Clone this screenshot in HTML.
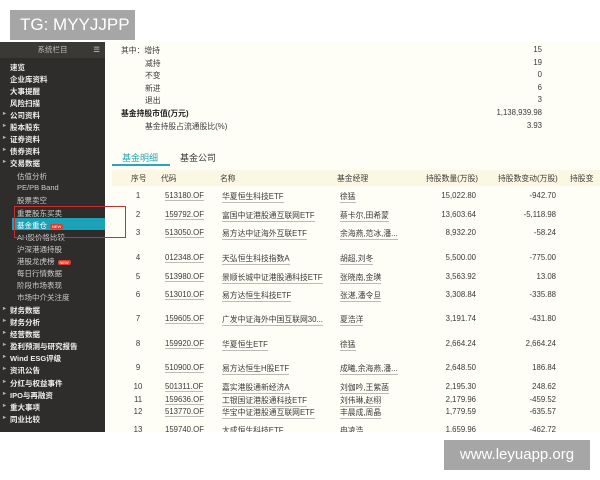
<!DOCTYPE html>
<html><head><meta charset="utf-8"><style>
*{margin:0;padding:0;box-sizing:border-box}
body{width:600px;height:480px;background:#fff;position:relative;overflow:hidden;font-family:"Liberation Sans","Noto Sans CJK SC",sans-serif;font-size:8px;color:#333}
.sb{position:absolute;left:0;top:42px;width:105px;height:390px;background:#2e2d2b}
.sbh{position:absolute;left:0;top:0;width:105px;height:16px;background:#3a3936;color:#bbb;font-size:7.5px;text-align:center;line-height:16px}
.it{position:absolute;left:10px;color:#eee;font-size:7.5px;font-weight:bold;white-space:nowrap}
.it.c{left:10px}
.it.c:before{content:"▸";position:absolute;left:-7px;color:#aaa;font-size:6px}
.it.s{left:17px;font-weight:normal;color:#ccc}
.main{position:absolute;left:105px;top:42px;width:495px;height:390px;background:#fefdf6}
.t{position:absolute;white-space:nowrap;font-size:7.8px;color:#3a3a3a}
.r{text-align:right}
.u{border-bottom:1px solid #bbb}
.new{background:#e03b2a;color:#fff;font-size:4px;padding:0 2px;border-radius:2px;margin-left:3px;vertical-align:middle}
</style></head><body>
<div style="position:absolute;left:10px;top:10px;width:125px;height:30px;background:#a6a6a6;color:#fff;font-size:17px;line-height:30px;padding-left:10px">TG: MYYJJPP</div>
<div class="sb">
<div class="sbh">系统栏目<span style="position:absolute;right:5px;color:#ccc">☰</span></div>
<div class="it" style="top:20px">速览</div>
<div class="it" style="top:32px">企业库资料</div>
<div class="it" style="top:44px">大事提醒</div>
<div class="it" style="top:56px">风险扫描</div>
<div class="it c" style="top:68px">公司资料</div>
<div class="it c" style="top:80px">股本股东</div>
<div class="it c" style="top:92px">证券资料</div>
<div class="it c" style="top:104px">债券资料</div>
<div class="it c" style="top:116px">交易数据</div>
<div class="it s" style="top:129px">估值分析</div>
<div class="it s" style="top:141px">PE/PB Band</div>
<div class="it s" style="top:153px">股票卖空</div>
<div class="it s" style="top:166px">重要股东买卖</div>
<div style="position:absolute;left:12px;top:176px;width:93px;height:12px;background:#1aa3b8"></div>
<div class="it s" style="top:178px;color:#fff">基金重仓<span class="new">NEW</span></div>
<div class="it s" style="top:190px">AH股价格比较</div>
<div class="it s" style="top:202px">沪深港通持股</div>
<div class="it s" style="top:214px">港股龙虎榜<span class="new">NEW</span></div>
<div class="it s" style="top:226px">每日行情数据</div>
<div class="it s" style="top:238px">阶段市场表现</div>
<div class="it s" style="top:250px">市场中介关注度</div>
<div class="it c" style="top:263px">财务数据</div>
<div class="it c" style="top:275px">财务分析</div>
<div class="it c" style="top:287px">经营数据</div>
<div class="it c" style="top:299px">盈利预测与研究报告</div>
<div class="it c" style="top:311px">Wind ESG评级</div>
<div class="it c" style="top:323px">资讯公告</div>
<div class="it c" style="top:336px">分红与权益事件</div>
<div class="it c" style="top:348px">IPO与再融资</div>
<div class="it c" style="top:360px">重大事项</div>
<div class="it c" style="top:372px">同业比较</div>
</div>
<div class="main"></div>
<div style="position:absolute;left:14px;top:206px;width:112px;height:32px;border:1.5px solid #c9302c"></div>

<div class="t" style="left:121px;top:45px">其中：增持</div>
<div class="t" style="left:145px;top:58px">减持</div>
<div class="t" style="left:145px;top:70px">不变</div>
<div class="t" style="left:145px;top:83px">新进</div>
<div class="t" style="left:145px;top:95px">退出</div>
<div class="t" style="left:121px;top:108px;font-weight:bold;color:#222">基金持股市值(万元)</div>
<div class="t" style="left:145px;top:121px">基金持股占流通股比(%)</div>
<div class="t r" style="right:58px;top:45px">15</div>
<div class="t r" style="right:58px;top:58px">19</div>
<div class="t r" style="right:58px;top:70px">0</div>
<div class="t r" style="right:58px;top:83px">6</div>
<div class="t r" style="right:58px;top:95px">3</div>
<div class="t r" style="right:58px;top:108px">1,138,939.98</div>
<div class="t r" style="right:58px;top:121px">3.93</div>

<div class="t" style="left:122px;top:151px;font-size:9px;color:#2aa6b5">基金明细</div>
<div class="t" style="left:180px;top:151px;font-size:9px">基金公司</div>
<div style="position:absolute;left:112px;top:164px;width:58px;height:1.5px;background:#2aa6b5"></div>
<div style="position:absolute;left:112px;top:170px;width:488px;height:16px;background:#fcf7e2"></div>
<div class="t" style="left:131px;top:173px">序号</div>
<div class="t" style="left:161px;top:173px">代码</div>
<div class="t" style="left:220px;top:173px">名称</div>
<div class="t" style="left:337px;top:173px">基金经理</div>
<div class="t" style="left:426px;top:173px">持股数量(万股)</div>
<div class="t" style="left:498px;top:173px">持股数变动(万股)</div>
<div class="t" style="left:570px;top:173px">持股变</div>

<div id="rows"></div>
<div style="position:absolute;left:105px;top:432px;width:495px;height:48px;background:#fff"></div>
<div style="position:absolute;left:444px;top:440px;width:146px;height:30px;background:#a6a6a6;color:#fff;font-size:15px;line-height:30px;text-align:center">www.leyuapp.org</div>
<script>
var d=[[196,1,"513180.OF","华夏恒生科技ETF","徐猛","15,022.80","-942.70"],
[215,2,"159792.OF","富国中证港股通互联网ETF","蔡卡尔,田希蒙","13,603.64","-5,118.98"],
[233,3,"513050.OF","易方达中证海外互联ETF","余海燕,范冰,潘...","8,932.20","-58.24"],
[258,4,"012348.OF","天弘恒生科技指数A","胡超,刘冬","5,500.00","-775.00"],
[277,5,"513980.OF","景顺长城中证港股通科技ETF","张晓南,金璜","3,563.92","13.08"],
[295,6,"513010.OF","易方达恒生科技ETF","张湛,潘令旦","3,308.84","-335.88"],
[319,7,"159605.OF","广发中证海外中国互联网30...","夏浩洋","3,191.74","-431.80"],
[344,8,"159920.OF","华夏恒生ETF","徐猛","2,664.24","2,664.24"],
[368,9,"510900.OF","易方达恒生H股ETF","成曦,余海燕,潘...","2,648.50","186.84"],
[387,10,"501311.OF","嘉实港股通新经济A","刘伽吟,王紫菡","2,195.30","248.62"],
[400,11,"159636.OF","工银国证港股通科技ETF","刘伟琳,赵栩","2,179.96","-459.52"],
[412,12,"513770.OF","华宝中证港股通互联网ETF","丰晨成,周晶","1,779.59","-635.57"],
[430,13,"159740.OF","大成恒生科技ETF","冉凌浩","1,659.96","-462.72"]];
var h="";d.forEach(function(r){var y=r[0]-5;
h+='<div class="t" style="left:128px;width:20px;text-align:center;top:'+y+'px">'+r[1]+'</div>'+
'<div class="t u" style="left:165px;top:'+y+'px">'+r[2]+'</div>'+
'<div class="t u" style="left:222px;top:'+y+'px">'+r[3]+'</div>'+
'<div class="t u" style="left:340px;top:'+y+'px">'+r[4]+'</div>'+
'<div class="t r" style="right:124px;top:'+y+'px">'+r[5]+'</div>'+
'<div class="t r" style="right:44px;top:'+y+'px">'+r[6]+'</div>';});
document.getElementById("rows").innerHTML=h;
</script>
</body></html>
